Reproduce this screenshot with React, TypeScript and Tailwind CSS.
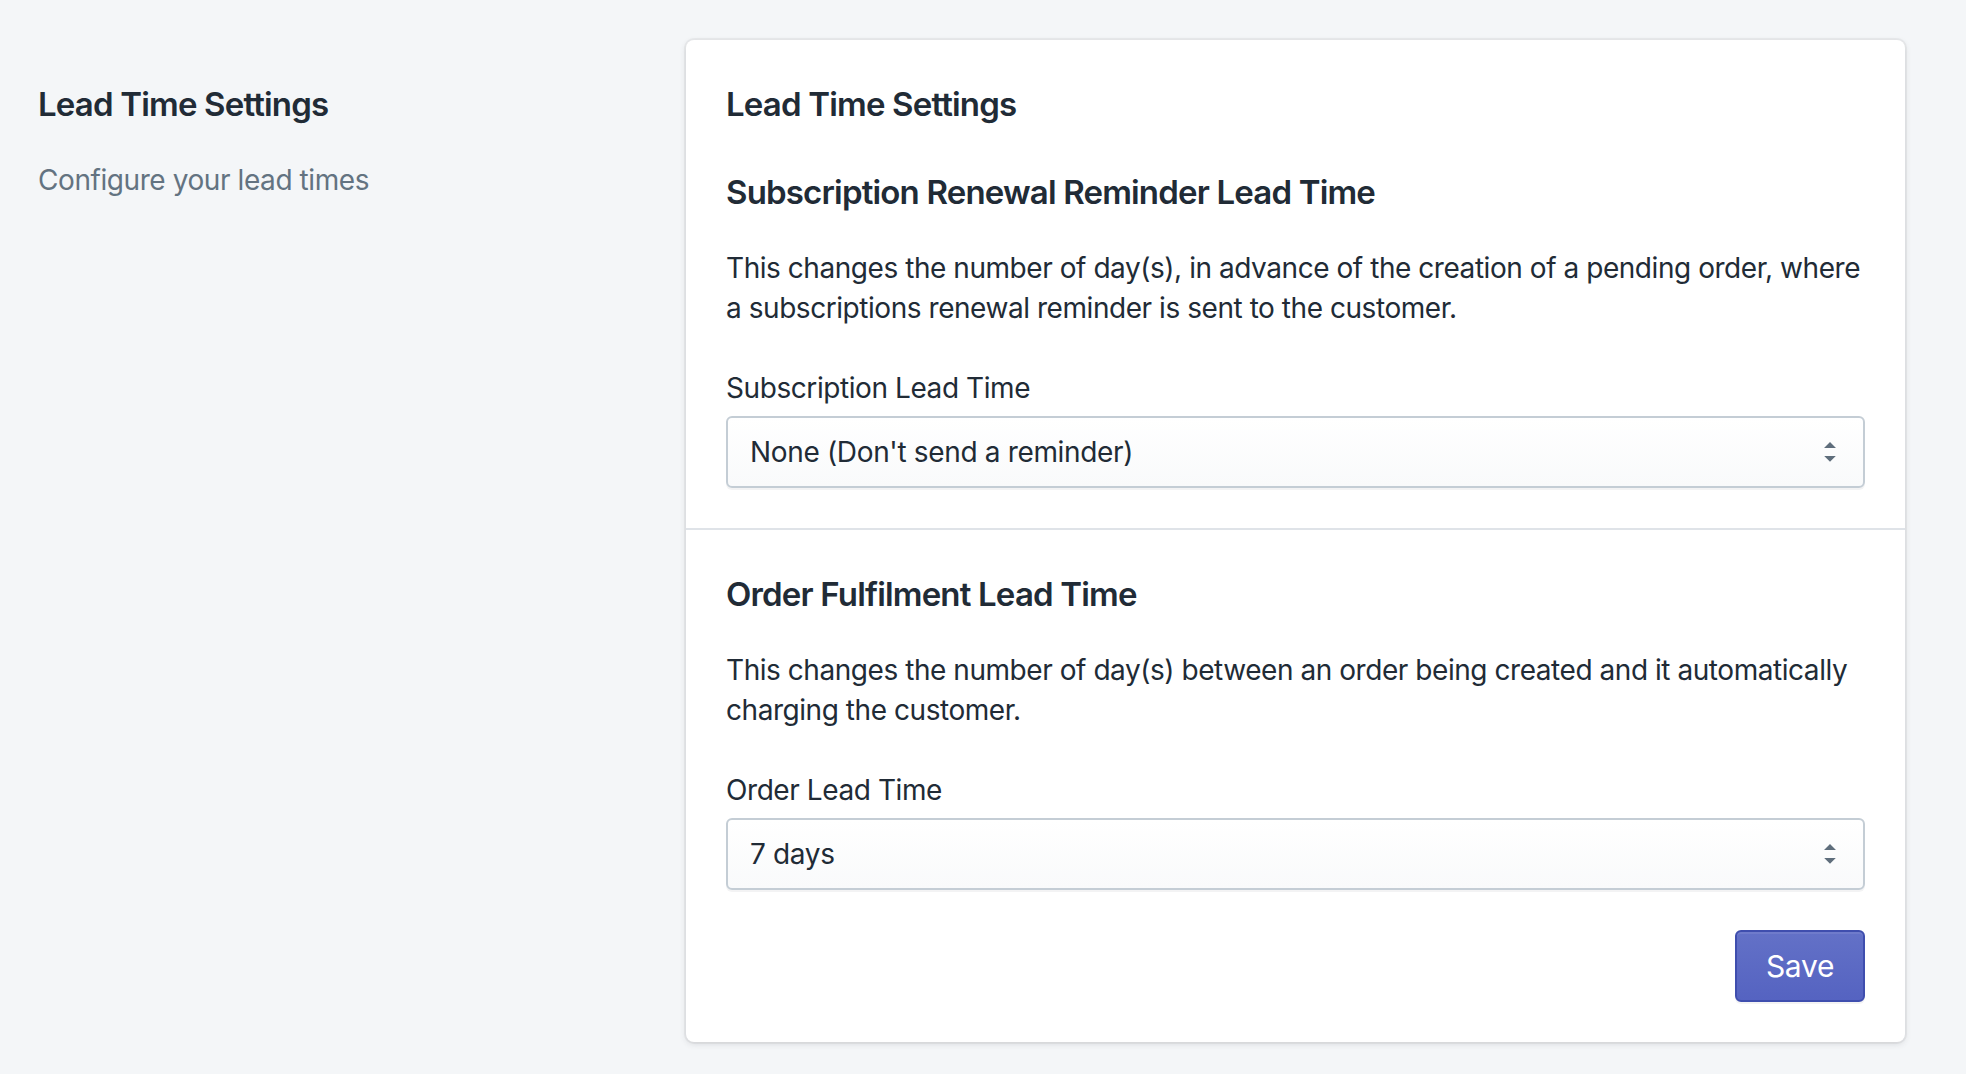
import React from "react";

function SelectArrows() {
  return (
    <svg width="40" height="40" viewBox="0 0 20 20" className="shrink-0">
      <path d="M13 8l-3-3-3 3h6zm-.1 4L10 14.9 7.1 12h5.8z" fill="#5f6e7c" />
    </svg>
  );
}

function SelectBox({ value }: { value: string }) {
  return (
    <div className="mt-[8px] h-[72px] w-full rounded-[6px] border-2 border-[#c4cdd5] bg-gradient-to-b from-[#ffffff] to-[#f9fafb] shadow-[0_2px_0_0_rgba(22,29,37,0.05)] flex items-center pl-[22px] pr-[13px]">
      <span className="flex-1 text-[28px] leading-[40px] tracking-[-0.012em] text-[#212b36] whitespace-nowrap">{value}</span>
      <SelectArrows />
    </div>
  );
}

export default function App() {
  return (
    <div
      className="min-h-[1074px] w-full bg-[#f4f6f8] flex pl-[38px] pr-[61px] pt-[40px] pb-[32px]"
      style={{ fontFamily: "Inter, 'Noto Sans', sans-serif" }}
    >
      <div className="w-[648px] shrink-0 pt-[40px]">
        <h2 className="text-[33px] leading-[48px] font-semibold tracking-[-0.025em] text-[#212b36]">Lead Time Settings</h2>
        <p className="mt-[32px] text-[28px] leading-[40px] tracking-[-0.015em] text-[#637381]">Configure your lead times</p>
      </div>
      <div className="flex-1 min-w-0 self-start bg-white rounded-[8px] shadow-[0_0_0_2px_rgba(63,63,68,0.06),0_2px_6px_0_rgba(63,63,68,0.15)]">
        <div className="px-[40px] pt-[40px]">
          <h2 className="text-[33px] leading-[48px] font-semibold tracking-[-0.025em] text-[#212b36]">Lead Time Settings</h2>
        </div>
        <div className="p-[40px]">
          <h3 className="text-[33px] leading-[48px] font-semibold tracking-[-0.025em] text-[#212b36]">Subscription Renewal Reminder Lead Time</h3>
          <p className="mt-[32px] text-[28px] leading-[40px] tracking-[-0.016em] text-[#212b36] whitespace-nowrap">
            This changes the number of day(s), in advance of the creation of a pending order, where
            <br />
            a subscriptions renewal reminder is sent to the customer.
          </p>
          <div className="mt-[40px] text-[28px] leading-[40px] tracking-[-0.015em] text-[#212b36]">Subscription Lead Time</div>
          <SelectBox value="None (Don't send a reminder)" />
        </div>
        <div className="border-t-2 border-[#dfe3e8] px-[40px] pt-[40px] pb-[40px]">
          <h3 className="text-[33px] leading-[48px] font-semibold tracking-[-0.025em] text-[#212b36]">Order Fulfilment Lead Time</h3>
          <p className="mt-[32px] text-[28px] leading-[40px] tracking-[-0.016em] text-[#212b36] whitespace-nowrap">
            This changes the number of day(s) between an order being created and it automatically
            <br />
            charging the customer.
          </p>
          <div className="mt-[40px] text-[28px] leading-[40px] tracking-[-0.015em] text-[#212b36]">Order Lead Time</div>
          <SelectBox value="7 days" />
          <div className="mt-[40px] flex justify-end">
            <button className="h-[72px] w-[130px] rounded-[6px] border-2 border-[#3f4eae] bg-gradient-to-b from-[#6371c7] to-[#5563c1] shadow-[inset_0_2px_0_0_#6f7bcb,0_2px_0_0_rgba(22,29,37,0.05)] text-white text-[30px] leading-[40px] tracking-[-0.01em]">
              Save
            </button>
          </div>
        </div>
      </div>
    </div>
  );
}
